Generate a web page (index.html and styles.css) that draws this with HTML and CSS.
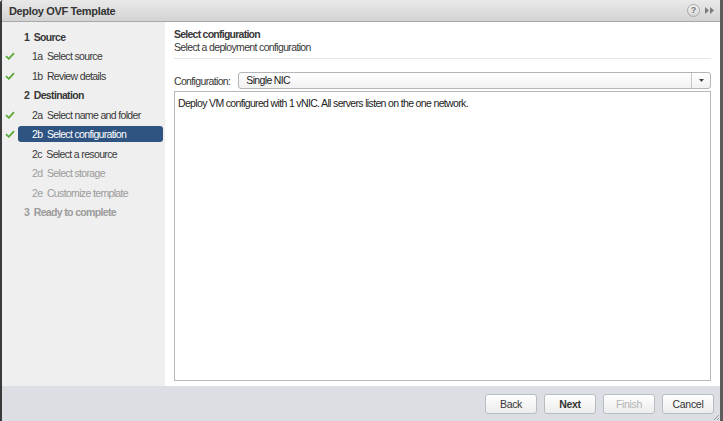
FILE: index.html
```html
<!DOCTYPE html>
<html lang="en">
<head>
    <meta charset="UTF-8">
    <title>Deploy OVF Template</title>
    <link rel="stylesheet" href="styles.css">
</head>
<body>
    <div class="dialog">
        <div class="titlebar">
            <span class="title">Deploy OVF Template</span>
            <span class="tools">
                <span class="help">?</span>
                <svg class="expand" width="9" height="7" viewBox="0 0 9 7"><path d="M0 0L4 3.5L0 7Z M5 0L9 3.5L5 7Z" fill="#7a7a7a"/></svg>
            </span>
        </div>

        <div class="main">
            <ul class="nav">
                <li class="head"><span class="check"></span><span class="label">1&nbsp; Source</span></li>
                <li class="step done"><span class="check"><svg width="10" height="8" viewBox="0 0 10 8"><path d="M1 4.2L3.8 6.8L9 1.2" fill="none" stroke="#5aa836" stroke-width="1.8"/></svg></span><span class="label">1a&nbsp; Select source</span></li>
                <li class="step done"><span class="check"><svg width="10" height="8" viewBox="0 0 10 8"><path d="M1 4.2L3.8 6.8L9 1.2" fill="none" stroke="#5aa836" stroke-width="1.8"/></svg></span><span class="label">1b&nbsp; Review details</span></li>
                <li class="head"><span class="check"></span><span class="label">2&nbsp; Destination</span></li>
                <li class="step done"><span class="check"><svg width="10" height="8" viewBox="0 0 10 8"><path d="M1 4.2L3.8 6.8L9 1.2" fill="none" stroke="#5aa836" stroke-width="1.8"/></svg></span><span class="label">2a&nbsp; Select name and folder</span></li>
                <li class="step done active"><span class="check"><svg width="10" height="8" viewBox="0 0 10 8"><path d="M1 4.2L3.8 6.8L9 1.2" fill="none" stroke="#5aa836" stroke-width="1.8"/></svg></span><span class="label">2b&nbsp; Select configuration</span></li>
                <li class="step"><span class="check"></span><span class="label">2c&nbsp; Select a resource</span></li>
                <li class="step off"><span class="check"></span><span class="label">2d&nbsp; Select storage</span></li>
                <li class="step off"><span class="check"></span><span class="label">2e&nbsp; Customize template</span></li>
                <li class="head off"><span class="check"></span><span class="label">3&nbsp; Ready to complete</span></li>
            </ul>

            <div class="content">
                <div class="page-head">
                    <div class="page-title">Select configuration</div>
                    <div class="page-sub">Select a deployment configuration</div>
                </div>
                <div class="config-row">
                    <span class="config-label">Configuration:</span>
                    <div class="select">
                        <span class="select-value">Single NIC</span>
                        <span class="select-arrow"><svg width="5" height="3" viewBox="0 0 5 3"><path d="M0 0H5L2.5 3Z" fill="#444"/></svg></span>
                    </div>
                </div>
                <div class="description">Deploy VM configured with 1 vNIC. All servers listen on the one network.</div>
            </div>
        </div>

        <div class="footer">
            <button class="btn">Back</button>
            <button class="btn primary">Next</button>
            <button class="btn" disabled>Finish</button>
            <button class="btn">Cancel</button>
            <svg class="grip" width="7" height="7" viewBox="0 0 7 7"><path d="M6 1L1 6 M6 4L4 6" stroke="#9a9a9a" stroke-width="1"/></svg>
        </div>
    </div>
</body>
</html>
```

FILE: styles.css
```css
body {
    margin: 0;
    font-family: "Liberation Sans", Arial, sans-serif;
    font-size: 10.5px;
    letter-spacing: -0.65px;
    color: #383838;
    background: #fff;
}

.dialog {
    width: 723px;
    height: 421px;
    display: flex;
    flex-direction: column;
    box-sizing: border-box;
    border-left: 2px solid #3a3a3a;
    border-right: 3px solid #5c5c5c;
    border-top-left-radius: 3px;
    overflow: hidden;
    position: relative;
}

.titlebar {
    height: 22px;
    flex: none;
    display: flex;
    align-items: center;
    justify-content: space-between;
    padding: 0 6px 0 7px;
    background: linear-gradient(#e9e9e9, #d3d3d3);
    border-bottom: 1px solid #a9a9a9;
    box-sizing: border-box;
}

.title {
    font-size: 11px;
    letter-spacing: -0.35px;
    font-weight: bold;
    color: #333;
}

.tools {
    display: flex;
    align-items: center;
    gap: 5px;
}

.help {
    width: 11px;
    height: 11px;
    border-radius: 50%;
    background: linear-gradient(#f4f4f4, #d6d6d6);
    border: 1px solid #a8a8a8;
    color: #777;
    font-size: 9px;
    letter-spacing: 0;
    font-weight: bold;
    line-height: 11px;
    text-align: center;
}

.main {
    flex: 1;
    display: flex;
    min-height: 0;
}

.nav {
    width: 163px;
    flex: none;
    margin: 0;
    padding: 5px 0 0;
    list-style: none;
    background: #efefef;
}

.nav li {
    height: 19.5px;
    display: flex;
    align-items: center;
}

.check {
    width: 16px;
    height: 8px;
    flex: none;
    display: flex;
    justify-content: center;
}

.label {
    height: 16px;
    line-height: 16px;
    white-space: nowrap;
}

.head .label {
    font-weight: bold;
    padding-left: 6px;
}

.step .label {
    flex: 1;
    padding-left: 14px;
    margin-right: 2px;
    border-radius: 3px;
}

.active .label {
    background: #2f5482;
    color: #fff;
}

.off .label {
    color: #9b9b9b;
}

.content {
    flex: 1;
    display: flex;
    flex-direction: column;
    padding: 6px 9px 5px 9px;
    background: #fff;
}

.page-head {
    padding-bottom: 4px;
    border-bottom: 1px solid #e6e6e6;
}

.page-title {
    font-weight: bold;
    line-height: 13px;
    letter-spacing: -0.75px;
}

.page-sub {
    line-height: 13px;
}

.config-row {
    display: flex;
    align-items: center;
    gap: 8px;
    margin-top: 13px;
}

.select {
    flex: 1;
    height: 17px;
    display: flex;
    align-items: stretch;
    box-sizing: border-box;
    border: 1px solid #b5b5b5;
    border-radius: 3px;
    background: linear-gradient(#ffffff, #f1f1f1);
}

.select-value {
    flex: 1;
    padding-left: 7px;
    line-height: 15px;
    color: #222;
}

.select-arrow {
    width: 18px;
    display: flex;
    align-items: center;
    justify-content: center;
    border-left: 1px solid #c8c8c8;
}

.description {
    flex: 1;
    margin-top: 2px;
    padding: 5px 3px;
    border: 1px solid #b8b8b8;
    color: #222;
}

.footer {
    height: 35px;
    flex: none;
    display: flex;
    align-items: center;
    justify-content: flex-end;
    gap: 7px;
    padding: 0 6px 0 0;
    background: #dbdfe4;
}

.btn {
    height: 20px;
    padding: 0;
    border: 1px solid #b9bcc0;
    border-radius: 3px;
    background: linear-gradient(#ffffff, #ececec);
    font-family: "Liberation Sans", Arial, sans-serif;
    font-size: 10.5px;
    letter-spacing: -0.3px;
    color: #333;
    width: 52px;
}

.btn.primary {
    font-weight: bold;
}

.btn:disabled {
    color: #b4b4b4;
}

.grip {
    position: absolute;
    right: 0;
    bottom: 0;
}
```
